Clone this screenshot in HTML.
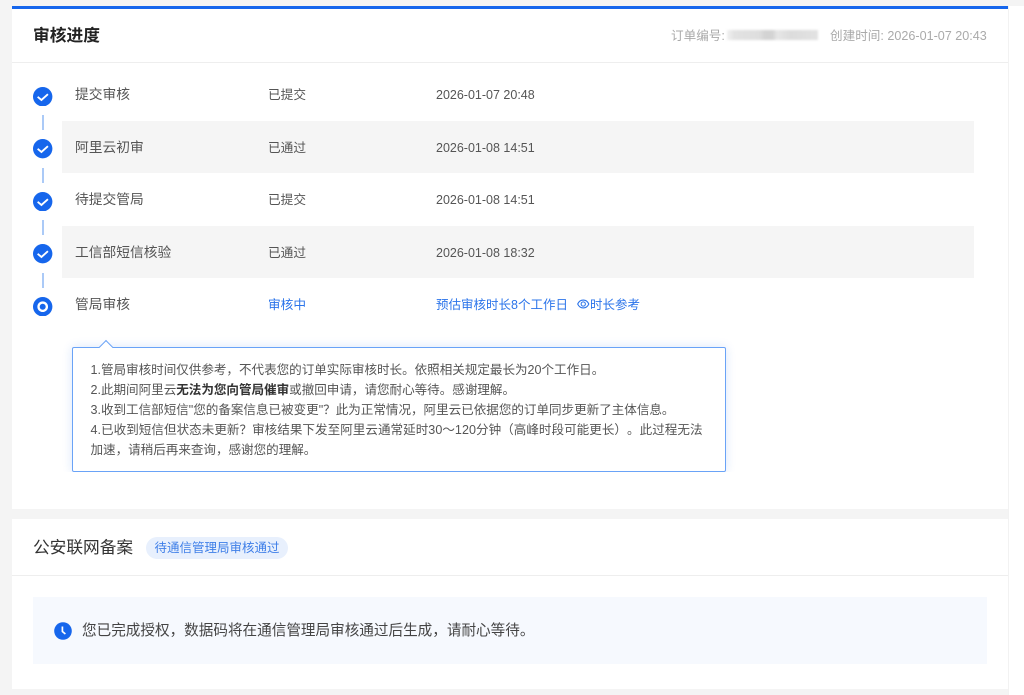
<!DOCTYPE html>
<html lang="zh-CN">
<head>
<meta charset="utf-8">
<title>审核进度</title>
<style>
html,body{margin:0;padding:0;background:#fff;}
body{width:1024px;height:695px;position:relative;overflow:hidden;font-family:"Liberation Sans","Noto Sans CJK SC",sans-serif;color:#555;text-spacing-trim:space-all;font-kerning:none;}
#w{position:absolute;left:0;top:0;width:1024px;height:695px;filter:blur(.3px);}
.a{position:absolute;white-space:nowrap;}
.t{font-size:12.7px;line-height:20px;height:20px;color:#555;}
.d{font-size:12.5px;line-height:20px;height:20px;color:#555;}
.big{font-size:13.75px;line-height:20px;height:20px;color:#555;}
.row{position:absolute;left:62px;width:912px;height:52.4px;background:#f5f5f5;}
.line{position:absolute;left:42.300px;width:1.800px;height:15px;background:#abcaf7;}
.ic{position:absolute;left:33.400px;width:19.400px;height:19.400px;}
.tip div{height:20px;line-height:20px;white-space:nowrap;}
</style>
</head>
<body>
<div id="w">
<div class="a" style="left:0;top:0;width:1024px;height:6px;background:#f4f4f4"></div>
<div class="a" style="left:0;top:0;width:12px;height:695px;background:#f4f4f4"></div>
<div class="a" style="left:12px;top:509px;width:996px;height:10px;background:#f4f4f4"></div>
<div class="a" style="left:12px;top:689px;width:996px;height:6px;background:#f4f4f4"></div>
<div class="a" style="left:1008px;top:6px;width:1px;height:689px;background:#f2f2f2"></div>
<div class="a" style="left:12px;top:6px;width:996px;height:3px;background:#1666ec"></div>
<div class="a" style="left:12px;top:62px;width:996px;height:1px;background:#eeeeee"></div>

<div class="a" style="left:33px;top:25px;font-size:16.75px;line-height:22px;font-weight:700;color:#222">审核进度</div>
<div class="a" style="left:671px;top:26px;font-size:12.6px;line-height:20px;color:#aaa">订单编号:</div>
<div class="a" style="left:727px;top:30px;width:91px;height:10px;background:linear-gradient(90deg,#f0f0f0 0,#e2e2e2 8%,#dedede 35%,#d3d3d3 42%,#d3d3d3 50%,#e6e6e6 55%,#dcdcdc 70%,#e2e2e2 100%);filter:blur(1px)"></div>
<div class="a" style="left:830px;top:26px;font-size:12.6px;line-height:20px;color:#aaa">创建时间: 2026-01-07 20:43</div>

<div class="row" style="top:121px"></div>
<div class="row" style="top:226px"></div>

<div class="line" style="top:115px"></div>
<div class="line" style="top:168px"></div>
<div class="line" style="top:220px"></div>
<div class="line" style="top:273px"></div>

<svg class="ic" style="top:86.800px" viewBox="0 0 20 20"><circle cx="10" cy="10" r="10" fill="#1666ec"/><path d="M4.800 10.100l3.900 3.300 6.700-6" fill="none" stroke="#fff" stroke-width="1.900"/></svg>
<svg class="ic" style="top:139.300px" viewBox="0 0 20 20"><circle cx="10" cy="10" r="10" fill="#1666ec"/><path d="M4.800 10.100l3.900 3.300 6.700-6" fill="none" stroke="#fff" stroke-width="1.900"/></svg>
<svg class="ic" style="top:191.800px" viewBox="0 0 20 20"><circle cx="10" cy="10" r="10" fill="#1666ec"/><path d="M4.800 10.100l3.900 3.300 6.700-6" fill="none" stroke="#fff" stroke-width="1.900"/></svg>
<svg class="ic" style="top:244.300px" viewBox="0 0 20 20"><circle cx="10" cy="10" r="10" fill="#1666ec"/><path d="M4.800 10.100l3.900 3.300 6.700-6" fill="none" stroke="#fff" stroke-width="1.900"/></svg>
<svg class="ic" style="top:296.500px" viewBox="0 0 20 20"><circle cx="10" cy="10" r="10" fill="#1666ec"/><circle cx="10" cy="10" r="4.300" fill="none" stroke="#fff" stroke-width="2.400"/></svg>

<div class="a big" style="left:75px;top:85.400px">提交审核</div>
<div class="a t" style="left:268px;top:85px">已提交</div>
<div class="a d" style="left:436px;top:85px">2026-01-07 20:48</div>

<div class="a big" style="left:75px;top:138px">阿里云初审</div>
<div class="a t" style="left:268px;top:138px">已通过</div>
<div class="a d" style="left:436px;top:138px">2026-01-08 14:51</div>

<div class="a big" style="left:75px;top:190px">待提交管局</div>
<div class="a t" style="left:268px;top:190px">已提交</div>
<div class="a d" style="left:436px;top:190px">2026-01-08 14:51</div>

<div class="a big" style="left:75px;top:243px">工信部短信核验</div>
<div class="a t" style="left:268px;top:243px">已通过</div>
<div class="a d" style="left:436px;top:243px">2026-01-08 18:32</div>

<div class="a big" style="left:75px;top:295px">管局审核</div>
<div class="a t" style="left:268px;top:295px;color:#2b74ea">审核中</div>
<div class="a d" style="left:436px;top:295px;color:#2b74ea">预估审核时长8个工作日</div>
<svg class="a" style="left:577px;top:298px" width="12.500" height="12" viewBox="0 0 13 12"><path d="M.7 6C2 3.200 4 1.900 6.500 1.900S11 3.200 12.300 6C11 8.800 9 10.100 6.500 10.100S2 8.800.7 6z" fill="none" stroke="#2b74ea" stroke-width="1.100"/><circle cx="6.500" cy="6" r="2.200" fill="none" stroke="#2b74ea" stroke-width="1.100"/></svg>
<div class="a d" style="left:590px;top:295px;color:#2b74ea">时长参考</div>

<div class="a tip" style="left:72px;top:346.500px;width:653.500px;height:125.500px;box-sizing:border-box;border:1px solid #6aa3f7;border-radius:2px;background:#fff;box-shadow:0 0 10px rgba(23,101,230,.16);clip-path:inset(-20px -20px 0 -20px);font-size:12.560px;color:#555">
  <div class="a" style="left:17.500px;top:12.500px">1.管局审核时间仅供参考，不代表您的订单实际审核时长。依照相关规定最长为20个工作日。</div>
  <div class="a" style="left:17.500px;top:32.500px">2.此期间阿里云<b style="color:#333">无法为您向管局催审</b>或撤回申请，请您耐心等待。感谢理解。</div>
  <div class="a" style="left:17.500px;top:52.500px">3.收到工信部短信"您的备案信息已被变更"？此为正常情况，阿里云已依据您的订单同步更新了主体信息。</div>
  <div class="a" style="left:17.500px;top:72.500px;letter-spacing:.04px">4.已收到短信但状态未更新？审核结果下发至阿里云通常延时30～120分钟（高峰时段可能更长）。此过程无法</div>
  <div class="a" style="left:17.500px;top:92.500px">加速，请稍后再来查询，感谢您的理解。</div>
</div>
<div class="a" style="left:100.500px;top:341.500px;width:9px;height:9px;background:#fff;border-left:1px solid #6aa3f7;border-top:1px solid #6aa3f7;transform:rotate(45deg)"></div>

<div class="a" style="left:33px;top:537px;font-size:16.700px;line-height:22px;color:#333">公安联网备案</div>
<div class="a" style="left:146px;top:537px;width:142px;height:22px;border-radius:11px;background:#e8f0fd;color:#3f7fe8;font-size:12.500px;line-height:23px;text-align:center">待通信管理局审核通过</div>
<div class="a" style="left:12px;top:575px;width:996px;height:1px;background:#eeeeee"></div>

<div class="a" style="left:33px;top:597px;width:954px;height:67px;background:#f6f9fe"></div>
<svg class="a" style="left:53.500px;top:622px" width="18" height="18" viewBox="0 0 18 18"><circle cx="9" cy="9" r="8.800" fill="#1666ec"/><path d="M8.400 4.500v5l3 2.500" fill="none" stroke="#fff" stroke-width="1.700"/></svg>
<div class="a" style="left:82px;top:621px;font-size:14.600px;line-height:20px;color:#444">您已完成授权，数据码将在通信管理局审核通过后生成，请耐心等待。</div>
</div>
</body>
</html>
